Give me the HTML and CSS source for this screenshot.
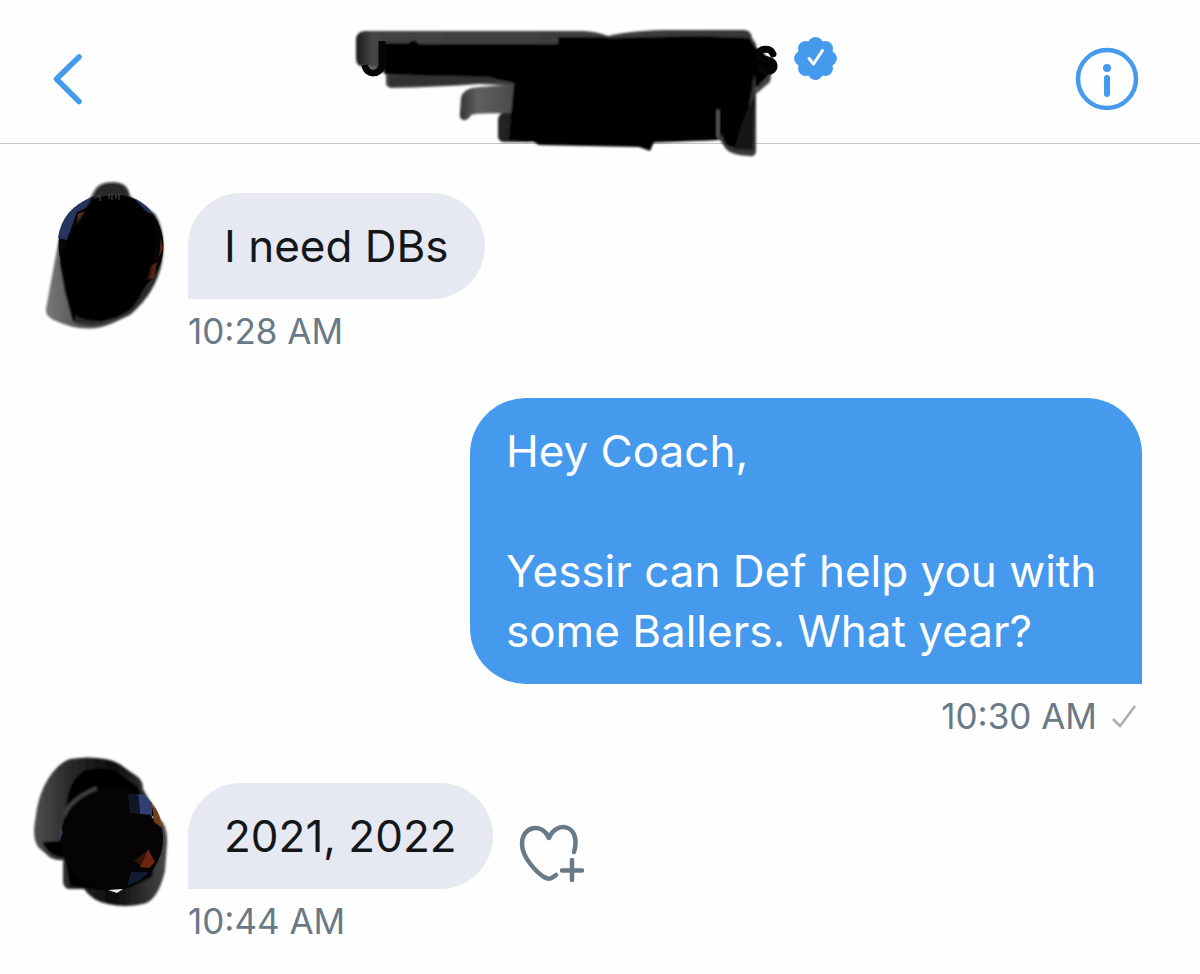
FILE: index.html
```html
<!DOCTYPE html>
<html lang="en">
<head>
<meta charset="utf-8">
<meta name="viewport" content="width=device-width, initial-scale=1">
<title>Direct message</title>
<link rel="stylesheet" href="styles.css">
</head>
<body>
<header class="topbar">
  <button class="icon-button back" type="button" aria-label="Back">
    <svg width="30" height="50" viewBox="53 54 30 50" fill="none"><path d="M79 57 56.500 79 79 101.500" stroke="#459aee" stroke-width="5.500" stroke-linecap="round" stroke-linejoin="round"/></svg>
  </button>
  <div class="title">
    <svg class="scribble" width="422" height="90" viewBox="357 15 422 90" aria-hidden="true">
      <defs>
        <filter id="soft" x="-10%" y="-20%" width="120%" height="140%"><feGaussianBlur stdDeviation="1.200"/></filter>
        <linearGradient id="edge" x1="0" x2="1" y1="0" y2="0"><stop offset="0" stop-color="#1c1c1c"/><stop offset=".04" stop-color="#444"/><stop offset="1" stop-color="#383838"/></linearGradient>
        <linearGradient id="tail" x1="0" x2="1" y1="0" y2="0"><stop offset="0" stop-color="#333"/><stop offset=".3" stop-color="#606060"/><stop offset="1" stop-color="#484848"/></linearGradient>
      </defs>
      <g filter="url(#soft)">
        <path fill="url(#edge)" d="M366 31H585Q600 32 609 36Q630 31 665 30H745Q752 30 753 38L757 44V90L757 152Q756 157 750 156Q732 155 727 149L721 140 652 143 600 90 480 84Q440 87 392 88Q387 87 387 83V73L362 66Q357 65 357 58V38Q358 32 366 31Z"/>
        <path fill="url(#tail)" d="M462 98Q464 88 480 87L520 84V114Q480 112 472 115Q469 121 464 120Q460 119 461 112Z"/>
        <path fill="#222" d="M504 113H530V142H504Q499 141 499 136V119Q500 114 504 113Z"/>
        <path fill="#000" d="M385 43H409L415 40 420 44H559V37H600L612 38 700 36 750 38 755 46 757 60 753 90 745 130 735 148 727 145 722 133 718 140 655 142 651 151 640 147 540 145 535 142 510 140 512 115 515 83 500 80 490 77 400 75 385 74Z"/>
        <path fill="#303030" d="M390 76 490 77 500 81 455 84 390 86Z"/>
        <path fill="#161616" d="M744 120 756 94 754 150 735 149Z"/>
        <path stroke="#666" stroke-width="2" fill="none" d="M719 110V137"/>
        <path fill="#444" d="M758 81 773 71 771 82 757 94Z"/>
        <path fill="#000" d="M752 44 764 52 774 66 768 77 757 88Z"/>
      </g>
      <path stroke="#050507" stroke-width="7" fill="none" d="M366 65C367 76 382 75 383 65V41"/>
      <path stroke="#050507" stroke-width="7" stroke-linecap="round" fill="none" d="M774 54C772 47 759 48 760 55 761 61 775 58 775 66 775 73 764 73 761 67"/>
      <path stroke="#5c5c5c" stroke-width="3" fill="none" d="M370 65Q373 69 377 66"/>
    </svg>
    <svg class="badge" width="43" height="43" viewBox="-21.500 -21.500 43 43" role="img" aria-label="Verified account">
      <g fill="#459aee"><circle r="18.500"/><circle cy="-13.800" r="7.600"/><circle cy="13.800" r="7.600"/><circle cx="-13.800" r="7.600"/><circle cx="13.800" r="7.600"/><circle cx="9.900" cy="-9.900" r="7.600"/><circle cx="-9.900" cy="-9.900" r="7.600"/><circle cx="9.900" cy="9.900" r="7.600"/><circle cx="-9.900" cy="9.900" r="7.600"/></g>
      <path d="M-6.500 0-2 5.500 7-8" fill="none" stroke="#fff" stroke-width="3" stroke-linecap="round" stroke-linejoin="round"/>
    </svg>
  </div>
  <button class="icon-button info" type="button" aria-label="Conversation info">
    <svg width="64" height="64" viewBox="0 0 64 64"><circle cx="32" cy="32" r="29" fill="none" stroke="#459aee" stroke-width="4.500"/><circle cx="32" cy="21" r="4" fill="#459aee"/><path d="M32 31V47" stroke="#459aee" stroke-width="6" stroke-linecap="round"/></svg>
  </button>
</header>
<main class="thread">
  <article class="message received">
    <svg class="avatar" width="188" height="106" viewBox="0 193 188 106" aria-hidden="true">
      <defs><linearGradient id="fade" x1="0" x2="1" y1="0" y2="0"><stop offset="0" stop-color="#777"/><stop offset=".4" stop-color="#4a4a4a"/><stop offset="1" stop-color="#222"/></linearGradient></defs>
      <g filter="url(#soft)">
        <path fill="url(#fade)" d="M59 238 46 309Q45 317 56 321Q86 335 113 323L130 315Q156 293 162 262Q166 230 155 214L130 196Q128 182 113 182 98 182 94 191L88 202Z"/>
      </g>
      <circle cx="111" cy="246" r="52.500" fill="#090506"/>
      <path fill="#26345f" d="M58 238Q62 208 93 197L88 207 77 212 67 240ZM134 198Q148 205 154 215L145 211Z"/>
      <path fill="#5a381f" d="M78 214 85 211 82 224 76 232Z"/>
      <path fill="#542313" d="M149 267 157 262 154 278 146 280ZM161 237 163 249 159 257Z"/>
      <g filter="url(#soft)">
        <path fill="#000" d="M92 199Q112 194 130 199Q146 208 153 222Q159 240 152 262Q148 288 132 308Q110 326 73 321L65 290 60 262 69 235 83 214Z"/>
        <path fill="#2c2c2c" d="M75 316Q90 323 110 321Q94 328 75 323Z"/>
      </g>
      <path fill="#292929" d="M94 197Q98 184 113 184Q126 184 128 196Q110 193 94 199Z"/>
      <path fill="none" stroke="#555" d="M109 194V199M112 194V200M116 194V199M119 194V200M98 195Q101 197 100 201"/>
    </svg>
    <div class="body">
      <p class="bubble">I need DBs</p>
      <time class="time">10:28 AM</time>
    </div>
  </article>
  <article class="message sent">
    <div class="body">
      <p class="bubble">Hey Coach,<br><br>Yessir can Def help you with some Ballers. What year?</p>
      <div class="time"><time>10:30 AM</time>
        <svg width="26" height="24" viewBox="0 0 26 24" role="img" aria-label="Sent"><path d="M2 15 9 22 24 2" fill="none" stroke="#a6afb6" stroke-width="2.500"/></svg>
      </div>
    </div>
  </article>
  <article class="message received">
    <svg class="avatar" width="188" height="106" viewBox="0 784 188 106" aria-hidden="true">
      <defs><linearGradient id="ring" x1="0" x2="1" y1="0" y2="0"><stop offset="0" stop-color="#505050"/><stop offset=".25" stop-color="#2c2c2c"/><stop offset=".6" stop-color="#0c0c0c"/><stop offset="1" stop-color="#484848"/></linearGradient></defs>
      <g filter="url(#soft)">
        <path fill="url(#ring)" d="M70 760Q88 757 105 760Q117 762 125 769L138 778Q143 782 143 790L160 820Q168 828 167 845L165 872Q158 902 143 905Q125 909 108 905Q92 902 84 890H68Q63 888 63 882V861Q52 862 46 855L38 848Q32 838 35 822Q38 795 48 780Q58 764 70 760Z"/>
        <path fill="#000" d="M66 815Q66 785 82 773Q100 765 118 774L138 788 142 800 160 840 152 878Q130 890 110 892L70 887 65 858Q50 860 42 843L60 842Z"/>
      </g>
      <circle cx="112" cy="840" r="51" fill="#050304"/>
      <path fill="none" stroke="#3d3d3d" stroke-width="5" filter="url(#soft)" d="M64 817Q70 800 97 789"/>
      <path fill="#303f70" d="M138 795 145 796 152 804 152 816 140 815Z"/>
      <path fill="#121727" d="M128 795 138 795 140 815 130 814Z"/>
      <path fill="#70401c" d="M152 804Q161 815 162 829L154 823Z"/>
      <path fill="#aaa" d="M151 816 154 818 153 820Z"/>
      <path fill="#6b2512" d="M140 868 148 850 155 863 149 869Z"/>
      <path fill="#34150c" d="M134 862 148 851 141 866Z"/>
      <path fill="#111a2e" d="M127 887 131 873 149 873Q142 882 127 887Z"/>
      <path fill="#333d50" d="M59 827 63 833 60 841Z"/>
      <path fill="#eee" d="M108 891 123 890 117 894Z"/>
    </svg>
    <div class="body">
      <div class="line">
        <p class="bubble">2021, 2022</p>
        <button class="icon-button react" type="button" aria-label="Add reaction">
          <svg width="66" height="60" viewBox="520 827 66 60" fill="none" stroke="#697986" stroke-width="4.500" stroke-linecap="round" stroke-linejoin="round"><path d="M575 854C583 826 557 822 550 840 543 824 523 828 523 846 523 859 537 874 545 879 550 882 552 881 557 877M573 862V882M563 872.500H583"/></svg>
        </button>
      </div>
      <time class="time">10:44 AM</time>
    </div>
  </article>
</main>
</body>
</html>
```
FILE: styles.css
```css
* {
  box-sizing: border-box;
}

body {
  margin: 0;
  background: #fefefe;
  color: #14171a;
  font-family: Inter, "Liberation Sans", sans-serif;
}

svg {
  display: block;
  flex: none;
  overflow: visible;
}

.topbar {
  display: grid;
  grid-template-columns: 1fr auto 1fr;
  align-items: start;
  padding: 15px 61px 0 53px;
  height: 144px;
  border-bottom: 1px solid #c4c6c8;
}

.icon-button {
  padding: 0;
  border: 0;
  background: none;
  cursor: pointer;
}

.back {
  justify-self: start;
  margin-top: 39px;
}

.info {
  justify-self: end;
  margin-top: 32px;
}

.title {
  display: flex;
  align-items: center;
  gap: 16px;
}

.badge {
  margin-bottom: 4px;
}

.thread {
  display: flex;
  flex-direction: column;
  gap: 47px;
  padding: 49px 58px 31px 0;
}

.message {
  display: flex;
  align-items: flex-start;
}

.sent {
  justify-content: flex-end;
}

.body {
  display: flex;
  flex-direction: column;
  align-items: flex-start;
  gap: 12px;
}

.sent .body {
  align-items: flex-end;
}

.line {
  display: flex;
  align-items: center;
  gap: 26px;
}

.bubble {
  margin: 0;
  padding: 23px 36px;
  max-width: 672px;
  border-radius: 56px 56px 56px 0;
  background: #e6e9f1;
  font-size: 44px;
  line-height: 60px;
}

.sent .bubble {
  border-radius: 56px 56px 0 56px;
  background: #459aee;
  color: #fff;
}

.time {
  display: flex;
  align-items: center;
  gap: 14px;
  color: #697986;
  font-size: 35px;
  line-height: 40px;
}

.sent .time {
  padding-right: 5px;
}

.react {
  margin-top: 38px;
}
```
